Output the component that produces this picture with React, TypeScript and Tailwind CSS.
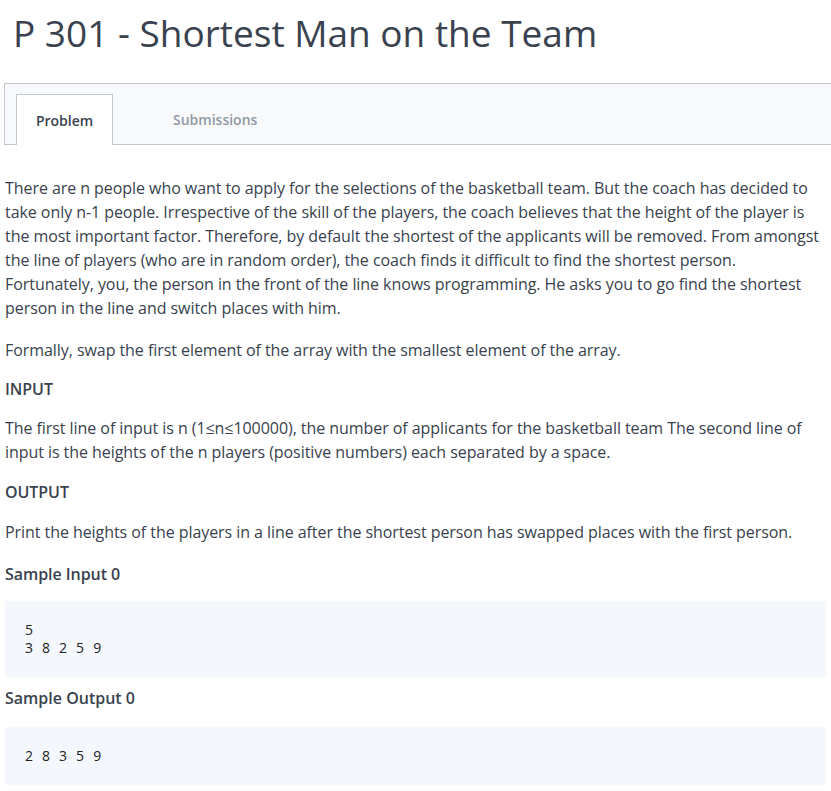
import React from "react";

const text = "text-[#39424e]";

function Tabs() {
  return (
    <div className="mt-[25px] ml-[4px] border-y border-l border-[#c2c7d0] bg-[#f8f9fa] pt-[10px] pl-[11px] flex items-end -mb-px">
      <div className="h-[51px] w-[97px] bg-white border-x border-t border-[#c2c7d0] flex items-center justify-center text-[14px] font-semibold text-[#39424e] -mb-px">
        Problem
      </div>
      <div className="h-[50px] ml-[60px] flex items-center text-[14px] font-semibold text-[#8f99a6]">
        Submissions
      </div>
    </div>
  );
}

function CodeBox({ lines, className = "" }: { lines: string[]; className?: string }) {
  return (
    <div className={`ml-[5px] mr-[5px] bg-[#f4f8fd] px-[20px] py-[20px] ${className}`}>
      {lines.map((l, i) => (
        <div key={i} className="whitespace-pre text-[14px] leading-[18px] tracking-[2.7px] text-[#222]">
          {l}
        </div>
      ))}
    </div>
  );
}

export default function App() {
  return (
    <div className="w-[831px] bg-white overflow-hidden" style={{ fontFamily: '"Open Sans", sans-serif' }}>
      <h1 className={`pl-[13px] pt-[8px] text-[37px] leading-[50px] ${text}`}>
        P 301 - Shortest Man on the Team
      </h1>
      <Tabs />
      <div className={`pl-[5px] pr-[7px] text-[16px] leading-[24px] tracking-[-0.06px] ${text}`}>
        <p className="mt-[32px]">
          There are n people who want to apply for the selections of the basketball team. But the coach has decided to
          take only n-1 people. Irrespective of the skill of the players, the coach believes that the height of the player is
          the most important factor. Therefore, by default the shortest of the applicants will be removed. From amongst
          the line of players (who are in random order), the coach finds it difficult to find the shortest person.
          Fortunately, you, the person in the front of the line knows programming. He asks you to go find the shortest
          person in the line and switch places with him.
        </p>
        <p className="mt-[18px]">Formally, swap the first element of the array with the smallest element of the array.</p>
        <h3 className="mt-[15px] font-semibold">INPUT</h3>
        <p className="mt-[15px]">
          The first line of input is n (1≤n≤100000), the number of applicants for the basketball team The second line of
          input is the heights of the n players (positive numbers) each separated by a space.
        </p>
        <h3 className="mt-[16px] font-semibold">OUTPUT</h3>
        <p className="mt-[16px]">
          Print the heights of the players in a line after the shortest person has swapped places with the first person.
        </p>
        <h3 className="mt-[18px] font-semibold">Sample Input 0</h3>
      </div>
      <CodeBox className="mt-[15px]" lines={["5", "3 8 2 5 9"]} />
      <div className={`pl-[5px] text-[16px] leading-[24px] ${text}`}>
        <h3 className="mt-[9px] font-semibold">Sample Output 0</h3>
      </div>
      <CodeBox className="mt-[17px]" lines={["2 8 3 5 9"]} />
      <div className="h-[20px]" />
    </div>
  );
}
